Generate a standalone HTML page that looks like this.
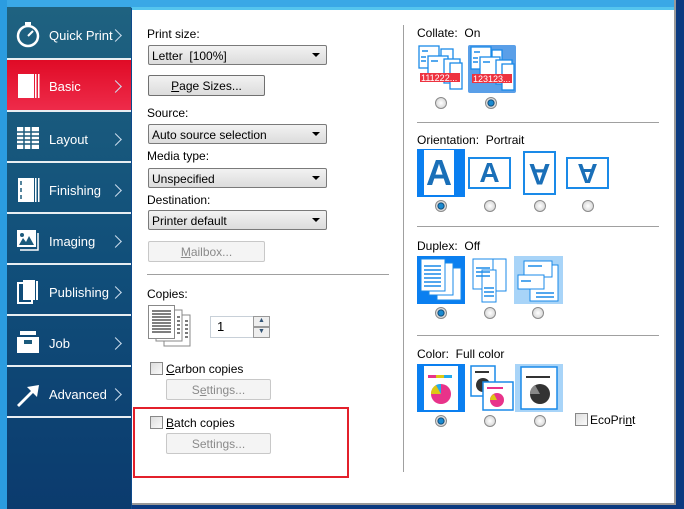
<!DOCTYPE html>
<html><head><meta charset="utf-8"><style>
*{box-sizing:border-box;margin:0;padding:0}
body{width:684px;height:509px;overflow:hidden;background:#0e4a8c;font-family:"Liberation Sans",sans-serif;font-size:12px;color:#000;position:relative}
.abs{position:absolute}
#top{left:0;top:0;width:684px;height:8px;background:#3aa8e6}
#left{left:0;top:0;width:7px;height:509px;background:#2b9ce0}
#side{left:7px;top:7px;width:124px;height:502px;background:linear-gradient(#1f6280,#114f7a 50%,#0b3b6e)}
.item{position:absolute;left:0;width:124px;height:51px;color:#fff;font-size:13px}
.item span{position:absolute;left:42px;top:21px}
.item .ch{position:absolute;width:9px;height:9px;border-top:1.5px solid #cde;border-right:1.5px solid #cde;transform:rotate(45deg);left:104px;top:24px}
.sep{position:absolute;left:0;width:124px;height:2px;background:#e8eef2}
#main{left:132px;top:7px;width:542px;height:496px;background:#fff;border-top:3px solid #55c5ee}
#rframe{left:674px;top:0;width:10px;height:509px;background:#0b3a80;border-left:2px solid #999}
#bframe{left:132px;top:503px;width:544px;height:6px;background:#0b3a80;border-top:2px solid #999}
.lbl{position:absolute;font-size:12px}
.sel{position:absolute;left:148px;width:179px;height:20px;border:1px solid #7a7a7a;border-radius:2px;background:linear-gradient(#f2f2f2,#dcdcdc);padding:3px 0 0 3px;font-size:12px}
.sel:after{content:"";position:absolute;right:6px;top:7px;border-left:4px solid transparent;border-right:4px solid transparent;border-top:4px solid #000}
.btn{position:absolute;width:117px;height:21px;border:1px solid #707070;border-radius:2px;background:linear-gradient(#f2f2f2,#dcdcdc);text-align:center;padding-top:3px;font-size:12px}
.btn.dis{border-color:#c8c8c8;background:#f4f4f4;color:#8a8a8a;width:105px}
.hr{position:absolute;height:1px;background:#a0a0a0}
.cb{position:absolute;width:13px;height:13px;border:1px solid #888;background:linear-gradient(135deg,#ddd,#fafafa)}
.rad{position:absolute;width:12px;height:12px;border-radius:50%;border:1px solid #8a8a8a;background:radial-gradient(#fff,#ccc)}
.rad.on{background:radial-gradient(#1a8ad0 30%,#0a3f6a 45%,#ddd 55%)}
.ic{position:absolute;border:2px solid #1a8ae8;background:#fff}
.A{position:absolute;color:#1a6fb8;font-weight:bold;font-family:"Liberation Sans",sans-serif;text-align:center}
</style></head><body>
<div class="abs" id="top"></div><div class="abs" id="left"></div>
<div class="abs" id="side">
<div class="item" style="top:0"><svg class="abs" style="left:8px;top:15px" width="26" height="26"><circle cx="13" cy="14" r="10" fill="none" stroke="#fff" stroke-width="2.5"/><rect x="10" y="0" width="6" height="3" fill="#fff"/><line x1="13" y1="14" x2="18" y2="9" stroke="#fff" stroke-width="2"/></svg><span>Quick Print</span><i class="ch"></i></div>
<div class="sep" style="top:51px"></div>
<div class="item" style="top:53px;height:50px;background:linear-gradient(#e00b26,#ee2b4a)"><svg class="abs" style="left:11px;top:14px" width="22" height="24"><rect x="0" y="0" width="16" height="24" fill="#fff"/><rect x="17" y="0" width="1.5" height="24" fill="#fff"/><rect x="20" y="0" width="1.5" height="24" fill="#fff"/></svg><span style="top:19px">Basic</span><i class="ch" style="top:22px"></i></div>
<div class="sep" style="top:103px"></div>
<div class="item" style="top:104px"><svg class="abs" style="left:10px;top:16px" width="22" height="22"><rect width="22" height="22" fill="#fff"/><g stroke="#1b5a7c" stroke-width="1.5"><line x1="7" y1="0" x2="7" y2="22"/><line x1="14" y1="0" x2="14" y2="22"/><line x1="0" y1="5" x2="22" y2="5"/><line x1="0" y1="9" x2="22" y2="9"/><line x1="0" y1="13" x2="22" y2="13"/><line x1="0" y1="17" x2="22" y2="17"/></g></svg><span>Layout</span><i class="ch"></i></div>
<div class="sep" style="top:154px"></div>
<div class="item" style="top:155px"><svg class="abs" style="left:11px;top:16px" width="22" height="24"><rect width="16" height="24" fill="#fff"/><rect x="17" width="1.5" height="24" fill="#fff"/><rect x="20" width="1.5" height="24" fill="#fff"/><g stroke="#1b5a7c" stroke-width="1.5"><line x1="3" y1="3" x2="3" y2="7"/><line x1="3" y1="10" x2="3" y2="14"/><line x1="3" y1="17" x2="3" y2="21"/></g></svg><span>Finishing</span><i class="ch"></i></div>
<div class="sep" style="top:205px"></div>
<div class="item" style="top:206px"><svg class="abs" style="left:10px;top:17px" width="24" height="22"><rect width="19" height="17" fill="#fff"/><path d="M2 15 L6 8 L9 12 L12 6 L17 15Z" fill="#1b5a7c"/><circle cx="5" cy="5" r="2" fill="#1b5a7c"/><path d="M21 3 V20 H3" fill="none" stroke="#fff" stroke-width="1.5"/></svg><span>Imaging</span><i class="ch"></i></div>
<div class="sep" style="top:256px"></div>
<div class="item" style="top:257px"><svg class="abs" style="left:10px;top:16px" width="24" height="24"><rect x="1" y="3" width="14" height="20" fill="none" stroke="#fff" stroke-width="2"/><rect x="6" y="0" width="12" height="20" fill="#fff"/><rect x="19" y="1" width="2" height="19" fill="#fff"/></svg><span>Publishing</span><i class="ch"></i></div>
<div class="sep" style="top:307px"></div>
<div class="item" style="top:308px"><svg class="abs" style="left:10px;top:16px" width="24" height="22"><rect x="3" y="0" width="16" height="4" fill="#fff"/><rect x="0" y="6" width="22" height="16" fill="#fff"/><rect x="7" y="9" width="8" height="4" fill="#1b5a7c"/></svg><span>Job</span><i class="ch"></i></div>
<div class="sep" style="top:358px"></div>
<div class="item" style="top:359px"><svg class="abs" style="left:10px;top:17px" width="24" height="24"><path d="M0 22 L14 8 L10 4 L22 2 L20 14 L16 10 L2 24Z" fill="#fff"/></svg><span>Advanced</span><i class="ch"></i></div>
<div class="sep" style="top:409px"></div>
</div>
<div class="abs" id="main"></div>
<div class="abs" id="rframe"></div><div class="abs" id="bframe"></div>

<div class="lbl" style="left:147px;top:27px">Print size:</div>
<div class="sel" style="top:45px">Letter&nbsp; [100%]</div>
<div class="btn" style="left:148px;top:75px"><u>P</u>age Sizes...</div>
<div class="lbl" style="left:147px;top:106px">Source:</div>
<div class="sel" style="top:124px">Auto source selection</div>
<div class="lbl" style="left:147px;top:149px">Media type:</div>
<div class="sel" style="top:168px">Unspecified</div>
<div class="lbl" style="left:147px;top:193px">Destination:</div>
<div class="sel" style="top:210px">Printer default</div>
<div class="btn dis" style="left:148px;top:241px;width:117px"><u>M</u>ailbox...</div>
<div class="hr" style="left:147px;top:274px;width:242px"></div>
<div class="lbl" style="left:147px;top:287px">Copies:</div>
<svg class="abs" style="left:148px;top:305px" width="45" height="43"><rect x="16" y="10" width="26" height="31" fill="#fff" stroke="#888"/><rect x="8" y="5" width="26" height="31" fill="#fff" stroke="#888"/><rect x="0.5" y="0.5" width="26" height="33" fill="#fff" stroke="#888"/><g stroke="#333" stroke-width="1.3"><line x1="4" y1="6" x2="23" y2="6"/><line x1="4" y1="9" x2="23" y2="9"/><line x1="4" y1="12" x2="23" y2="12"/><line x1="4" y1="15" x2="23" y2="15"/><line x1="4" y1="18" x2="23" y2="18"/><line x1="4" y1="21" x2="23" y2="21"/><line x1="4" y1="24" x2="23" y2="24"/><line x1="4" y1="27" x2="23" y2="27"/><line x1="29" y1="12" x2="32" y2="12"/><line x1="29" y1="16" x2="32" y2="16"/><line x1="29" y1="20" x2="32" y2="20"/><line x1="29" y1="24" x2="32" y2="24"/><line x1="29" y1="28" x2="32" y2="28"/><line x1="37" y1="16" x2="40" y2="16"/><line x1="37" y1="20" x2="40" y2="20"/><line x1="37" y1="24" x2="40" y2="24"/><line x1="37" y1="28" x2="40" y2="28"/><line x1="37" y1="32" x2="40" y2="32"/></g></svg>
<div class="abs" style="left:210px;top:316px;width:60px;height:22px;border:1px solid #c8d0d8;padding:2px 0 0 6px;font-size:13px">1</div>
<div class="abs" style="left:253px;top:316px;width:17px;height:11px;border:1px solid #999;background:#eee;font-size:7px;text-align:center;color:#357">▲</div>
<div class="abs" style="left:253px;top:327px;width:17px;height:11px;border:1px solid #999;background:#eee;font-size:7px;text-align:center;color:#357">▼</div>
<div class="cb" style="left:150px;top:362px"></div>
<div class="lbl" style="left:166px;top:362px"><u>C</u>arbon copies</div>
<div class="btn dis" style="left:166px;top:379px">S<u>e</u>ttings...</div>
<div class="abs" style="left:133px;top:407px;width:216px;height:71px;border:2px solid #e3202b"></div>
<div class="cb" style="left:150px;top:416px"></div>
<div class="lbl" style="left:166px;top:416px"><u>B</u>atch copies</div>
<div class="btn dis" style="left:166px;top:433px">Settings...</div>

<div class="abs" style="left:403px;top:25px;width:1px;height:447px;background:#a0a0a0"></div>

<div class="lbl" style="left:417px;top:26px">Collate:&nbsp; On</div>
<svg class="abs" style="left:418px;top:45px" width="46" height="46"><g fill="#fff" stroke="#1a8ae8" stroke-width="1.3"><rect x="1" y="1" width="20" height="22"/><rect x="23" y="4" width="12" height="20"/><rect x="10" y="11" width="20" height="20"/><rect x="26" y="14" width="16" height="24"/><rect x="32" y="18" width="12" height="26"/></g><g stroke="#1a8ae8" stroke-width="1.5"><line x1="4" y1="6" x2="10" y2="6"/><line x1="13" y1="16" x2="20" y2="16"/><line x1="3" y1="12" x2="8" y2="12"/><line x1="3" y1="16" x2="8" y2="16"/></g><rect x="2" y="28" width="40" height="9" fill="#ee3340"/><text x="3" y="36" font-size="9" fill="#fff" font-family="Liberation Sans">111222...</text></svg>
<div class="abs" style="left:468px;top:45px;width:48px;height:48px;background:#5a9fe8;border-radius:2px"></div>
<svg class="abs" style="left:470px;top:46px" width="46" height="46"><g fill="#fff" stroke="#1a8ae8" stroke-width="1.3"><rect x="1" y="1" width="20" height="22"/><rect x="22" y="4" width="10" height="20"/><rect x="10" y="11" width="20" height="20"/><rect x="26" y="14" width="16" height="24"/><rect x="32" y="18" width="12" height="26"/></g><g stroke="#1a8ae8" stroke-width="1.5"><line x1="4" y1="6" x2="10" y2="6"/><line x1="13" y1="16" x2="20" y2="16"/><line x1="3" y1="12" x2="8" y2="12"/><line x1="3" y1="16" x2="8" y2="16"/></g><rect x="2" y="28" width="40" height="9" fill="#ee3340"/><text x="3" y="36" font-size="9" fill="#fff" font-family="Liberation Sans">123123...</text></svg>
<div class="rad" style="left:435px;top:97px"></div><div class="rad on" style="left:485px;top:97px"></div>
<div class="hr" style="left:417px;top:122px;width:242px"></div>

<div class="lbl" style="left:417px;top:133px">Orientation:&nbsp; Portrait</div>
<div class="abs" style="left:417px;top:149px;width:48px;height:48px;background:#0a7ff0"></div>
<div class="abs A" style="left:424px;top:150px;width:30px;height:45px;background:#fff;font-size:36px;line-height:45px">A</div>
<div class="ic" style="left:468px;top:157px;width:43px;height:32px"></div><div class="A" style="left:468px;top:157px;width:43px;font-size:28px;line-height:32px">A</div>
<div class="ic" style="left:523px;top:151px;width:33px;height:44px"></div><div class="A" style="left:523px;top:151px;width:33px;font-size:30px;line-height:44px;transform:rotate(180deg)">A</div>
<div class="ic" style="left:566px;top:157px;width:43px;height:32px"></div><div class="A" style="left:566px;top:157px;width:43px;font-size:28px;line-height:32px;transform:rotate(180deg)">A</div>
<div class="rad on" style="left:435px;top:200px"></div><div class="rad" style="left:484px;top:200px"></div><div class="rad" style="left:534px;top:200px"></div><div class="rad" style="left:582px;top:200px"></div>
<div class="hr" style="left:417px;top:226px;width:242px"></div>

<div class="lbl" style="left:417px;top:239px">Duplex:&nbsp; Off</div>
<div class="abs" style="left:417px;top:256px;width:48px;height:48px;background:#0a7ff0"></div>
<svg class="abs" style="left:419px;top:258px" width="44" height="44"><g fill="#fff" stroke="#1a8ae8"><rect x="18" y="10" width="24" height="32"/><rect x="10" y="5" width="24" height="32"/><rect x="2" y="1" width="24" height="32"/></g><g stroke="#1a8ae8" stroke-width="1.5"><line x1="5" y1="8" x2="22" y2="8"/><line x1="5" y1="12" x2="22" y2="12"/><line x1="5" y1="16" x2="22" y2="16"/><line x1="5" y1="20" x2="22" y2="20"/><line x1="5" y1="24" x2="22" y2="24"/><line x1="5" y1="28" x2="22" y2="28"/></g></svg>
<svg class="abs" style="left:472px;top:258px" width="36" height="46"><g fill="#fff" stroke="#1a8ae8"><rect x="20" y="1" width="14" height="32"/><rect x="1" y="1" width="20" height="30"/><rect x="10" y="12" width="14" height="32"/></g><g stroke="#1a8ae8" stroke-width="1.5"><line x1="4" y1="10" x2="18" y2="10"/><line x1="4" y1="14" x2="18" y2="14"/><line x1="4" y1="18" x2="18" y2="18"/><line x1="12" y1="30" x2="22" y2="30"/><line x1="12" y1="34" x2="22" y2="34"/><line x1="12" y1="38" x2="22" y2="38"/></g></svg>
<div class="abs" style="left:514px;top:256px;width:49px;height:48px;background:#a8d4f8"></div>
<svg class="abs" style="left:516px;top:259px" width="45" height="44"><g fill="#fff" stroke="#1a8ae8"><rect x="14" y="6" width="28" height="36"/><rect x="8" y="2" width="28" height="16"/><rect x="2" y="16" width="26" height="14"/></g><g stroke="#1a8ae8" stroke-width="1.5"><line x1="12" y1="7" x2="26" y2="7"/><line x1="5" y1="22" x2="15" y2="22"/><line x1="20" y1="34" x2="38" y2="34"/><line x1="20" y1="38" x2="38" y2="38"/></g></svg>
<div class="rad on" style="left:435px;top:307px"></div><div class="rad" style="left:484px;top:307px"></div><div class="rad" style="left:532px;top:307px"></div>
<div class="hr" style="left:417px;top:335px;width:242px"></div>

<div class="lbl" style="left:417px;top:347px">Color:&nbsp; Full color</div>
<div class="abs" style="left:417px;top:364px;width:48px;height:48px;background:#0a7ff0"></div>
<svg class="abs" style="left:424px;top:366px" width="34" height="44"><rect width="34" height="44" fill="#fff"/><rect x="4" y="9" width="8" height="3" fill="#e83388"/><rect x="12" y="9" width="8" height="3" fill="#dcc814"/><rect x="20" y="9" width="8" height="3" fill="#22aaee"/><circle cx="17" cy="28" r="10" fill="#e8338a"/><path d="M17 28 L7 28 A10 10 0 0 1 12 19Z" fill="#dcc814"/><path d="M17 28 L12 19 A10 10 0 0 1 17 18Z" fill="#22aaee"/></svg>
<svg class="abs" style="left:470px;top:365px" width="44" height="46"><rect x="1" y="1" width="24" height="30" fill="#fff" stroke="#1a8ae8" stroke-width="1.5"/><rect x="5" y="6" width="14" height="2" fill="#333"/><circle cx="13" cy="20" r="7" fill="#333"/><rect x="13" y="17" width="30" height="28" fill="#fff" stroke="#1a8ae8" stroke-width="1.5"/><rect x="17" y="22" width="16" height="2" fill="#e8338a"/><circle cx="27" cy="35" r="7" fill="#e8338a"/><path d="M27 35 L20 35 A7 7 0 0 1 24 29Z" fill="#dcc814"/></svg>
<div class="abs" style="left:515px;top:364px;width:48px;height:48px;background:#a8d4f8"></div>
<svg class="abs" style="left:520px;top:366px" width="38" height="44"><rect x="1" y="1" width="36" height="42" fill="#fff" stroke="#1a8ae8" stroke-width="1.5"/><rect x="6" y="10" width="24" height="2" fill="#333"/><circle cx="20" cy="28" r="10" fill="#333"/><path d="M20 28 L10 28 A10 10 0 0 1 15 19Z" fill="#888"/></svg>
<div class="rad on" style="left:435px;top:415px"></div><div class="rad" style="left:484px;top:415px"></div><div class="rad" style="left:534px;top:415px"></div>
<div class="cb" style="left:575px;top:413px"></div>
<div class="lbl" style="left:590px;top:413px">EcoPri<u>n</u>t</div>
</body></html>
